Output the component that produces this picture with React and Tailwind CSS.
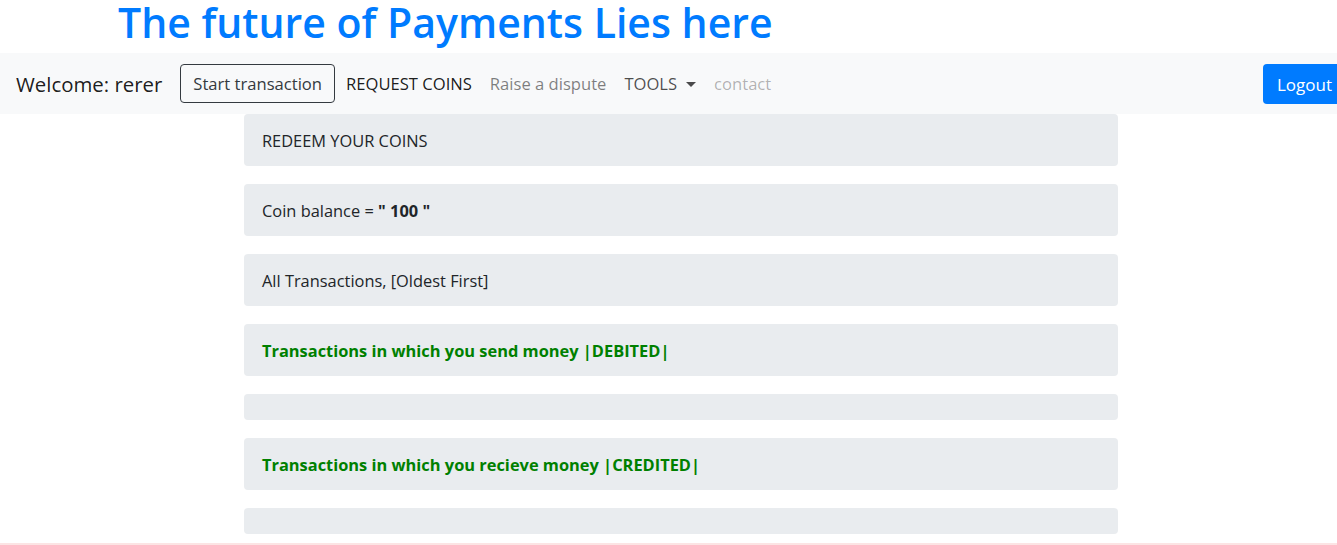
export default function App() {
  return (
    <div className="bg-white min-h-[545px] text-[#212529] font-['Open_Sans',_'Noto_Sans',_sans-serif]">
      <h1 className="h-[53px] pl-[118px] text-[41px] leading-[44px] font-semibold text-[#007bff] whitespace-nowrap">
        The future of Payments Lies here
      </h1>

      <nav className="h-[61px] bg-[#f8f9fa] flex items-center pl-4">
        <span className="pt-[2px] text-[20.4px] text-[rgba(0,0,0,0.9)]">Welcome: rerer</span>
        <button className="ml-[18px] h-[39px] px-3 pt-[2px] border border-[#343a40] rounded text-[16.6px] text-[#343a40]">
          Start transaction
        </button>
        <a className="ml-[2px] px-[9px] pt-[2px] text-[16.6px] text-[rgba(0,0,0,0.9)]">REQUEST COINS</a>
        <a className="px-[9px] pt-[2px] text-[16.6px] text-[rgba(0,0,0,0.5)]">Raise a dispute</a>
        <a className="px-[9px] pt-[2px] text-[16.6px] text-[rgba(0,0,0,0.7)] flex items-center">
          TOOLS
          <span className="ml-[9px] w-0 h-0 border-x-[5px] border-x-transparent border-t-[5px] border-t-[rgba(0,0,0,0.7)]"></span>
        </a>
        <a className="px-[9px] pt-[2px] text-[16.6px] text-[rgba(0,0,0,0.3)]">contact</a>
        <button className="ml-auto h-[40px] w-[74px] pl-[14px] pt-[2px] text-left bg-[#007bff] text-white text-[17px] rounded-l whitespace-nowrap overflow-hidden">
          Logout
        </button>
      </nav>

      <div className="w-[874px] ml-[244px] flex flex-col gap-[18px] text-[16.4px]">
        <div className="bg-[#e9ecef] rounded-[4px] h-[52px] px-[18px] pt-[2px] flex items-center">REDEEM YOUR COINS</div>
        <div className="bg-[#e9ecef] rounded-[4px] h-[52px] px-[18px] pt-[2px] flex items-center">
          Coin balance =&nbsp;<b>" 100 "</b>
        </div>
        <div className="bg-[#e9ecef] rounded-[4px] h-[52px] px-[18px] pt-[2px] flex items-center">All Transactions, [Oldest First]</div>
        <div className="bg-[#e9ecef] rounded-[4px] h-[52px] px-[18px] pt-[2px] flex items-center font-bold text-[#008000]">
          Transactions in which you send money |DEBITED|
        </div>
        <div className="bg-[#e9ecef] rounded-[4px] h-[26px]"></div>
        <div className="bg-[#e9ecef] rounded-[4px] h-[52px] px-[18px] pt-[2px] flex items-center font-bold text-[#008000]">
          Transactions in which you recieve money |CREDITED|
        </div>
        <div className="bg-[#e9ecef] rounded-[4px] h-[26px]"></div>
      </div>
      <div className="mt-[9px] h-[20px] bg-[#fce4e4]"></div>
    </div>
  );
}
